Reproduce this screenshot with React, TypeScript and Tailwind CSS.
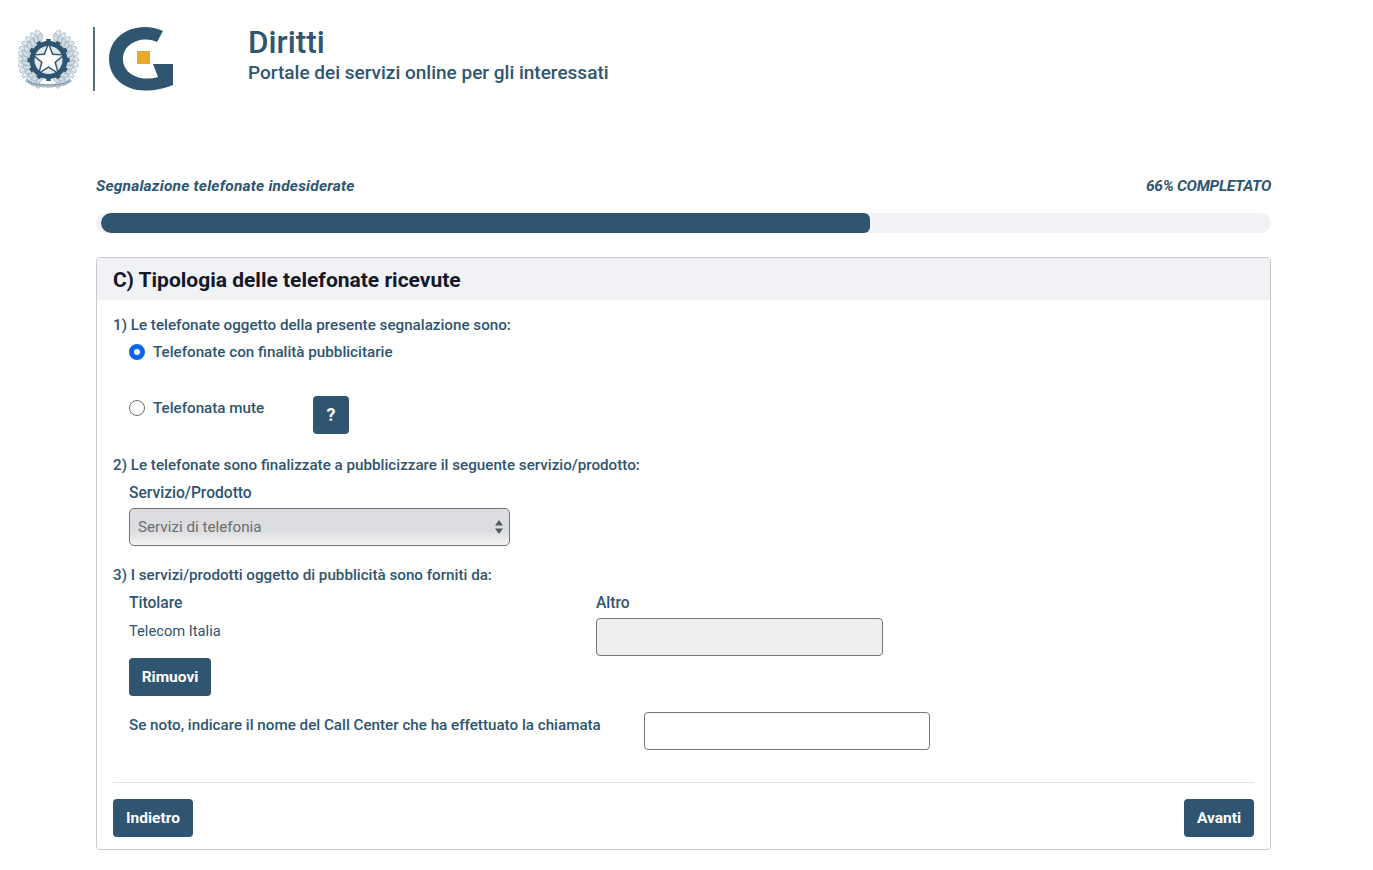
import React from "react";

const font = { fontFamily: '"Roboto", "Noto Sans", sans-serif' };

function star(cx: number, cy: number, R: number, r: number) {
  const pts: string[] = [];
  for (let i = 0; i < 10; i++) {
    const rad = i % 2 === 0 ? R : r;
    const a = ((-90 + i * 36) * Math.PI) / 180;
    pts.push(`${(cx + rad * Math.cos(a)).toFixed(2)},${(cy + rad * Math.sin(a)).toFixed(2)}`);
  }
  return pts.join(" ");
}

function Wreath() {
  const cx = 48;
  const cy = 59;
  const leaves: React.ReactNode[] = [];
  [-1, 1].forEach((s) => {
    for (let i = 0; i < 13; i++) {
      const deg = 158 - i * 11.5;
      const a = (deg * Math.PI) / 180;
      [27, 22.5].forEach((rad, j) => {
        const x = cx + s * rad * Math.sin(a);
        const y = cy - rad * Math.cos(a);
        leaves.push(
          <ellipse
            key={`${s}-${i}-${j}`}
            cx={x}
            cy={y}
            rx={2}
            ry={4.4}
            fill={j === 0 ? "#e6ecf0" : "#d3dde4"}
            stroke="#8fa6b6"
            strokeWidth={0.6}
            transform={`rotate(${s * (deg + (j === 0 ? 25 : -25))} ${x} ${y})`}
          />,
        );
      });
    }
  });
  return <g>{leaves}</g>;
}

function Logo() {
  const teeth = Array.from({ length: 12 }, (_, i) => i * 30);
  return (
    <svg width="156" height="66" viewBox="18 26 156 66" className="block shrink-0">
      <Wreath />
      <path d="M26 80 C34 87 42 85 48 86 C54 85 62 87 71 80" fill="none" stroke="#a9bac6" strokeWidth="3.4" />
      <path d="M28 81 C35 86 42 84 48 85 C54 84 61 86 69 81" fill="none" stroke="#5f7f95" strokeWidth="1" strokeDasharray="1.5 1.2" />
      <circle cx="48.5" cy="60" r="19" fill="#2f5570" />
      {teeth.map((d) => (
        <rect key={d} x="46.3" y="39" width="4.4" height="4" fill="#2f5570" transform={`rotate(${d} 48.5 60)`} />
      ))}
      <circle cx="48.5" cy="60" r="14" fill="#dfe7ec" />
      <polygon points={star(48.5, 60, 18, 8)} fill="#2f5570" />
      <polygon points={star(48.5, 60, 14.5, 6.2)} fill="#ffffff" />
      <rect x="93" y="27" width="2" height="64" fill="#4f7086" />
      <path
        d="M163 31 C157 28.5 151 27 145 27 C124 27 109 41 109 59 C109 77 124 90.500 145 90.500 C155 90.500 165 88.500 173 85 L173 64 L153 64 L158 77 C154.500 78 151 78.500 147 78.500 C133 78.500 123 70.500 123 59 C123 47.500 133 39.500 146 39.500 C150 39.500 154 40.500 157 42 Z"
        fill="#2f5570"
      />
      <rect x="137" y="51" width="13" height="13" fill="#eaa92c" />
    </svg>
  );
}

function Btn({ children, className = "" }: { children: React.ReactNode; className?: string }) {
  return (
    <button className={`h-[38px] rounded bg-[#2f5570] text-[15.5px] font-bold text-white ${className}`}>{children}</button>
  );
}

export default function App() {
  return (
    <div style={font} className="min-h-[870px] bg-white text-[15.2px] font-medium leading-6 text-[#2f5570]">
      <header className="flex items-start pl-[18px] pt-[26px]">
        <Logo />
        <div className="ml-[74px]">
          <div className="mt-[1px] text-[31.500px] font-medium leading-8">Diritti</div>
          <div className="text-[19px] font-medium leading-7">Portale dei servizi online per gli interessati</div>
        </div>
      </header>

      <main className="mx-auto mt-[82px] w-[1175px] -translate-x-[3px]">
        <div className="flex justify-between text-[15.5px] font-bold italic">
          <span className="tracking-[0.2px]">Segnalazione telefonate indesiderate</span>
          <span className="tracking-[-0.3px]">66% COMPLETATO</span>
        </div>
        <div className="mt-[15px] h-5 overflow-hidden rounded-full bg-[#f1f2f5] pl-[5px]">
          <div className="h-full w-[769px] rounded-l-[10px] rounded-r-[6px] bg-[#2f5570]" />
        </div>

        <section className="mt-6 h-[593px] overflow-hidden rounded border border-[#c9c9c9]">
          <div className="flex h-[42px] items-center bg-[#f1f2f5] pl-4 pt-[2px] text-[21px] font-bold text-[#15182a]">
            C) Tipologia delle telefonate ricevute
          </div>
          <div className="px-4 pt-[13px]">
            <div>1) Le telefonate oggetto della presente segnalazione sono:</div>
            <div className="pl-4">
              <label className="mt-[3px] flex h-6 items-center gap-2">
                <span className="h-4 w-4 rounded-full border-[5px] border-[#0b66e4] bg-white" />
                Telefonate con finalità pubblicitarie
              </label>
              <div className="mt-[32px] flex h-6 items-start">
                <span className="mr-2 mt-1 h-4 w-4 rounded-full border border-[#6f6f6f] bg-white" />
                <span className="w-[160px]">Telefonata mute</span>
                <button className="flex h-[38px] w-9 shrink-0 items-center justify-center rounded bg-[#2f5570] text-[18px] font-bold text-white">
                  ?
                </button>
              </div>
            </div>
            <div className="mt-[33px]">2) Le telefonate sono finalizzate a pubblicizzare il seguente servizio/prodotto:</div>
            <div className="pl-4">
              <div className="mt-1 text-[15.600px]">Servizio/Prodotto</div>
              <div className="relative mt-[3px] flex h-[38px] w-[381px] items-center rounded-[5px] border border-[#6f7378] bg-gradient-to-b from-[#dcdde0] from-60% to-[#f2f3f4] pl-2 font-normal text-[#6a6d70]">
                Servizi di telefonia
                <svg width="8" height="14" viewBox="0 0 8 14" className="absolute right-[6px] top-[11px]">
                  <path d="M4 0 L8 5.500 L0 5.500 Z M4 14 L0 8.500 L8 8.500 Z" fill="#555a60" />
                </svg>
              </div>
            </div>
            <div className="mt-[17px]">3) I servizi/prodotti oggetto di pubblicità sono forniti da:</div>
            <div className="pl-4">
              <div className="mt-1 flex">
                <div className="w-[467px]">
                  <div className="text-[15.600px]">Titolare</div>
                  <div className="mt-1 text-[14.700px] font-normal">Telecom Italia</div>
                </div>
                <div>
                  <div className="text-[15.600px]">Altro</div>
                  <div className="mt-[3px] h-[38px] w-[287px] rounded border border-[#777] bg-[#eceef0]" />
                </div>
              </div>
              <Btn className="mt-[2px] block w-[82px]">Rimuovi</Btn>
              <div className="mt-4 flex">
                <div className="mt-[1px] w-[515px]">Se noto, indicare il nome del Call Center che ha effettuato la chiamata</div>
                <div className="h-[38px] w-[286px] rounded border border-[#777] bg-white" />
              </div>
            </div>
            <div className="mt-8 flex justify-between border-t border-[#e3e3e3] pt-4">
              <Btn className="w-20">Indietro</Btn>
              <Btn className="w-[70px]">Avanti</Btn>
            </div>
          </div>
        </section>
      </main>
    </div>
  );
}
